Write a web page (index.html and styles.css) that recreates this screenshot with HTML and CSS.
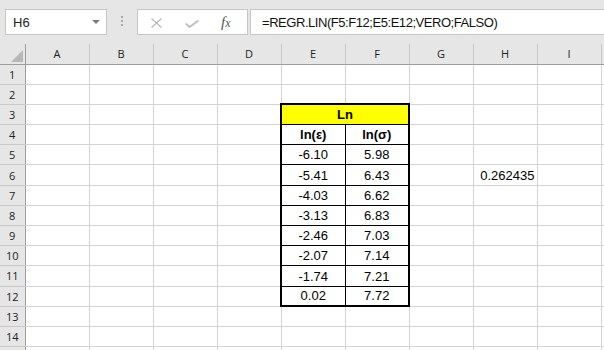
FILE: index.html
```html
<!DOCTYPE html>
<html>

    <head>
        <meta charset="utf-8">
        <title>Foglio1</title>
        <link rel="stylesheet" href="styles.css">
    </head>

    <body>
        <div class="barra-formula">
            <div class="casella-nome">
                <span>H6</span>
                <span class="freccia"></span>
            </div>
            <div class="maniglia"><i></i><i></i><i></i></div>
            <div class="pulsanti">
                <svg class="annulla" width="11" height="10" viewBox="0 0 11 10">
                    <path d="M0.5 0.5 L10.5 9.5 M10.5 0.5 L0.5 9.5" />
                </svg>
                <svg class="invio" width="14" height="8" viewBox="0 0 14 8">
                    <path d="M0.8 3.6 L4.6 7 L13.2 0.6" />
                </svg>
                <span class="fx">f<span>x</span></span>
            </div>
            <div class="formula">=REGR.LIN(F5:F12;E5:E12;VERO;FALSO)</div>
        </div>

        <table class="foglio">
            <colgroup>
                <col class="c-intest">
                <col class="c"><col class="c"><col class="c"><col class="c"><col class="c">
                <col class="c"><col class="c"><col class="c"><col class="c"><col class="c">
            </colgroup>
            <tr class="intest">
                <th class="angolo">
                    <svg width="12" height="12" viewBox="0 0 12 12"><path d="M12 0 L12 12 L0 12 Z" /></svg>
                </th>
                <th>A</th><th>B</th><th>C</th><th>D</th><th>E</th><th>F</th><th>G</th><th>H</th><th>I</th><th></th>
            </tr>
            <tr><th>1</th><td></td><td></td><td></td><td></td><td></td><td></td><td></td><td></td><td></td><td></td></tr>
            <tr><th>2</th><td></td><td></td><td></td><td></td><td></td><td></td><td></td><td></td><td></td><td></td></tr>
            <tr><th>3</th><td></td><td></td><td></td><td></td>
                <td colspan="2" class="t cima sx dx giallo">Ln</td>
                <td></td><td></td><td></td><td></td></tr>
            <tr><th>4</th><td></td><td></td><td></td><td></td>
                <td class="t sx tit">ln(ε)</td><td class="t dx tit">ln(σ)</td>
                <td></td><td></td><td></td><td></td></tr>
            <tr><th>5</th><td></td><td></td><td></td><td></td>
                <td class="t sx">-6.10</td><td class="t dx">5.98</td>
                <td></td><td></td><td></td><td></td></tr>
            <tr><th>6</th><td></td><td></td><td></td><td></td>
                <td class="t sx">-5.41</td><td class="t dx">6.43</td>
                <td></td><td class="num">0.262435</td><td></td><td></td></tr>
            <tr><th>7</th><td></td><td></td><td></td><td></td>
                <td class="t sx">-4.03</td><td class="t dx">6.62</td>
                <td></td><td></td><td></td><td></td></tr>
            <tr><th>8</th><td></td><td></td><td></td><td></td>
                <td class="t sx">-3.13</td><td class="t dx">6.83</td>
                <td></td><td></td><td></td><td></td></tr>
            <tr><th>9</th><td></td><td></td><td></td><td></td>
                <td class="t sx">-2.46</td><td class="t dx">7.03</td>
                <td></td><td></td><td></td><td></td></tr>
            <tr><th>10</th><td></td><td></td><td></td><td></td>
                <td class="t sx">-2.07</td><td class="t dx">7.14</td>
                <td></td><td></td><td></td><td></td></tr>
            <tr><th>11</th><td></td><td></td><td></td><td></td>
                <td class="t sx">-1.74</td><td class="t dx">7.21</td>
                <td></td><td></td><td></td><td></td></tr>
            <tr><th>12</th><td></td><td></td><td></td><td></td>
                <td class="t sx fondo">0.02</td><td class="t dx fondo">7.72</td>
                <td></td><td></td><td></td><td></td></tr>
            <tr><th>13</th><td></td><td></td><td></td><td></td><td></td><td></td><td></td><td></td><td></td><td></td></tr>
            <tr><th>14</th><td></td><td></td><td></td><td></td><td></td><td></td><td></td><td></td><td></td><td></td></tr>
            <tr><th></th><td></td><td></td><td></td><td></td><td></td><td></td><td></td><td></td><td></td><td></td></tr>
        </table>
    </body>

</html>
```

FILE: styles.css
```css
html,
body {
    margin: 0;
    padding: 0;
    width: 604px;
    height: 350px;
    overflow: hidden;
    background-color: #e6e6e6;
    font-family: "Liberation Sans", Arial, sans-serif;
}

/* barra della formula */
.barra-formula {
    display: flex;
    align-items: flex-start;
    box-sizing: border-box;
    height: 44px;
    padding: 9px 0 0 5px;
}

.casella-nome,
.pulsanti,
.formula {
    box-sizing: border-box;
    height: 26px;
    background-color: #fff;
    border: 1px solid #c6c6c6;
    display: flex;
    align-items: center;
}

.casella-nome {
    width: 102px;
    padding-left: 7px;
    font-size: 13px;
    color: #222;
}

.freccia {
    margin-left: auto;
    margin-right: 6px;
    border-left: 4px solid transparent;
    border-right: 4px solid transparent;
    border-top: 4px solid #7a7a7a;
}

.maniglia {
    display: flex;
    flex-direction: column;
    gap: 2px;
    margin: 7px 14px 0 14px;
}

.maniglia i {
    display: block;
    width: 2px;
    height: 2px;
    background-color: #a8a8a8;
}

.pulsanti {
    width: 111px;
    padding-left: 13px;
}

.annulla path {
    stroke: #b8b8b8;
    stroke-width: 1.2;
    fill: none;
}

.annulla {
    margin-top: 1px;
}

.invio {
    margin-left: 23px;
    margin-top: 3px;
}

.invio path {
    stroke: #c2c2c2;
    stroke-width: 2;
    fill: none;
}

.fx {
    margin-left: 22px;
    font-family: "Liberation Serif", serif;
    font-style: italic;
    font-size: 15px;
    color: #555;
}

.fx span {
    font-size: 12px;
}

.formula {
    flex: 1;
    margin-left: 2px;
    margin-right: -2px;
    padding-left: 11px;
    font-size: 13px;
    letter-spacing: -0.45px;
    color: #111;
    white-space: nowrap;
}

/* griglia del foglio */
.foglio {
    border-collapse: collapse;
    table-layout: fixed;
    width: 665px;
    background-color: #fff;
}

.c-intest {
    width: 25px;
}

.c {
    width: 64px;
}

.foglio tr {
    height: 20.2px;
}

.foglio tr.intest {
    height: 20px;
}

.foglio th {
    background-color: #e6e6e6;
    font-family: "Open Sans", sans-serif;
    font-weight: normal;
    font-size: 11px;
    color: #222;
    padding: 0;
    text-align: center;
    border-right: 1px solid #9e9e9e;
    border-bottom: 1px solid #c8c8c8;
}

.intest th {
    border-right: 1px solid #c8c8c8;
    border-bottom: 1px solid #9e9e9e;
}

.intest th.angolo {
    border-right: 1px solid #9e9e9e;
    text-align: right;
    vertical-align: bottom;
    padding: 0 2px 2px 0;
}

.angolo svg {
    display: block;
    margin-left: auto;
}

.angolo path {
    fill: #b7b7b7;
}

.foglio td {
    border: 1px solid #d4d4d4;
    padding: 0 2px 2px;
    font-size: 13px;
    color: #000;
    vertical-align: bottom;
    white-space: nowrap;
    overflow: hidden;
}

.foglio td.num {
    text-align: right;
}

.foglio td.t {
    border: 1px solid #000;
    text-align: center;
}

.foglio td.sx {
    border-left: 2px solid #000;
}

.foglio td.dx {
    border-right: 2px solid #000;
}

.foglio td.cima {
    border-top: 2px solid #000;
}

.foglio td.fondo {
    border-bottom: 2px solid #000;
}

.foglio td.giallo {
    background-color: #ffff00;
    font-weight: bold;
}

.foglio td.tit {
    font-weight: bold;
}
```
